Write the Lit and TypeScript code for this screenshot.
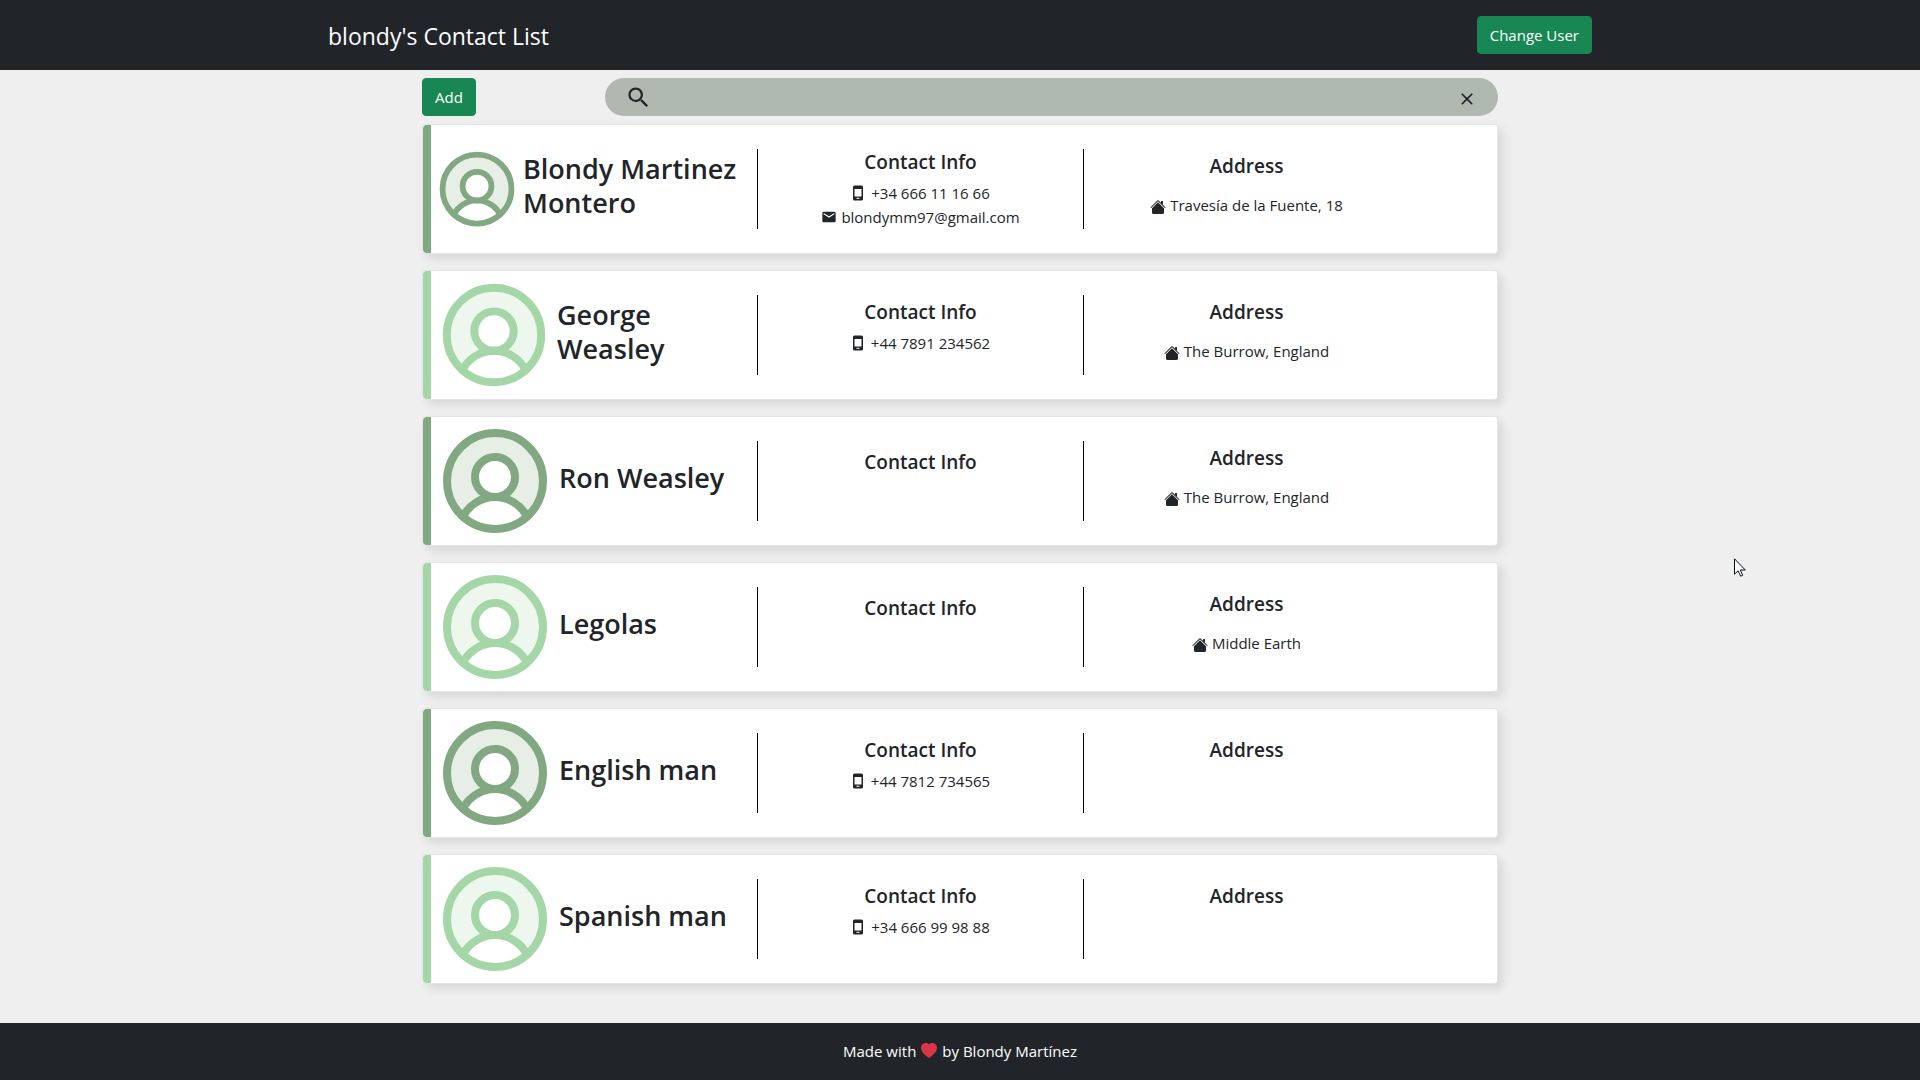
import { LitElement, html, css, svg, nothing } from "lit";
import { customElement, property, state } from "lit/decorators.js";
import { classMap } from "lit/directives/class-map.js";

interface Contact {
  name: string;
  phone?: string;
  email?: string;
  address?: string;
  avatar: "large" | "medium" | "small";
}

const CONTACTS: Contact[] = [
  { name: "Blondy Martinez Montero", phone: "+34 666 11 16 66", email: "blondymm97@gmail.com", address: "Travesía de la Fuente, 18", avatar: "small" },
  { name: "George Weasley", phone: "+44 7891 234562", address: "The Burrow, England", avatar: "medium" },
  { name: "Ron Weasley", address: "The Burrow, England", avatar: "large" },
  { name: "Legolas", address: "Middle Earth", avatar: "large" },
  { name: "English man", phone: "+44 7812 734565", avatar: "large" },
  { name: "Spanish man", phone: "+34 666 99 98 88", avatar: "large" },
];

const icon = (cls: string, box: number, body: unknown) =>
  html`<svg class=${cls} viewBox="0 0 ${box} ${box}" fill="currentColor" aria-hidden="true">${body}</svg>`;

const searchIcon = icon("search-icon", 24, svg`<path d="M15.5 14h-.79l-.28-.27A6.471 6.471 0 0 0 16 9.5 6.5 6.5 0 1 0 9.5 16c1.61 0 3.09-.59 4.23-1.57l.27.28v.79l5 4.99L20.49 19l-4.99-5zm-6 0C7.01 14 5 11.99 5 9.5S7.01 5 9.5 5 14 7.01 14 9.5 11.99 14 9.5 14z"/>`);
const closeIcon = icon("close-icon", 24, svg`<path d="M19 6.41 17.59 5 12 10.59 6.41 5 5 6.41 10.59 12 5 17.59 6.41 19 12 13.41 17.59 19 19 17.59 13.41 12z"/>`);
const phoneIcon = icon("line-icon", 16, svg`<path fill-rule="evenodd" d="M3.500 .5h7A1.500 1.500 0 0 1 12 2v12a1.500 1.500 0 0 1-1.500 1.500h-7A1.500 1.500 0 0 1 2 14V2A1.500 1.500 0 0 1 3.500 .5zM3.500 4v7.500h7V4zM5.500 12.800v1h3v-1z"/>`);
const mailIcon = icon("line-icon", 24, svg`<path d="M20 4H4c-1.1 0-1.99.9-1.99 2L2 18c0 1.1.9 2 2 2h16c1.1 0 2-.9 2-2V6c0-1.1-.9-2-2-2zm0 4-8 5-8-5V6l8 5 8-5v2z"/>`);
const houseIcon = icon("line-icon", 16, svg`<path fill-rule="evenodd" d="m8 3.293 6 6V13.5a1.5 1.5 0 0 1-1.5 1.5h-9A1.5 1.5 0 0 1 2 13.5V9.293l6-6zm5-.793V6l-2-2V2.5a.5.5 0 0 1 .5-.5h1a.5.5 0 0 1 .5.5z"/><path fill-rule="evenodd" d="M7.293 1.5a1 1 0 0 1 1.414 0l6.647 6.646a.5.5 0 0 1-.708.708L8 2.207 1.354 8.854a.5.5 0 1 1-.708-.708L7.293 1.5z"/>`);
const heartIcon = icon("heart-icon", 16, svg`<path fill-rule="evenodd" d="M8 1.314C12.438-3.248 23.534 4.735 8 15-7.534 4.736 3.562-3.248 8 1.314z"/>`);

@customElement("contact-card")
class ContactCard extends LitElement {
  @property({ attribute: false }) contact!: Contact;
  @property({ type: Boolean }) light = false;

  static styles = css`
    :host { display: block; }
    .card {
      border: 1px solid rgba(0, 0, 0, 0.1);
      border-radius: 4px;
      background: #fff;
      box-shadow: 5px 5px 10px rgba(0, 0, 0, 0.1);
      color: #212529;
    }
    .body {
      display: grid;
      grid-template-columns: 163fr 163fr 163fr 44fr;
      align-items: center;
      min-height: 128px;
      border-left: 8px solid #82a882;
      border-radius: 4px;
      --accent: #82a882;
    }
    .body.light { border-left-color: #a5d6a7; --accent: #a5d6a7; }
    .who { display: flex; align-items: center; padding-right: 16px; }
    .avatar { flex: none; color: var(--accent); }
    .large { width: 128px; height: 128px; }
    .medium { width: 126px; height: 126px; }
    .small { width: 92px; height: 92px; }
    .name { margin: 0 0 6px; font-size: 27px; line-height: 34px; font-weight: 550; }
    .info, .address {
      display: flex;
      flex-direction: column;
      align-items: center;
      justify-content: center;
      height: 80px;
      border-left: 1px solid #000;
    }
    .label { margin: 0; padding-top: 1px; font-size: 19px; line-height: 24px; font-weight: 600; }
    .info .label { margin-bottom: 7px; }
    .line {
      display: flex;
      align-items: center;
      gap: 4px;
      margin: 0;
      min-height: 16px;
      font-size: 15px;
      line-height: 24px;
      font-weight: 400;
    }
    .address .label { margin-bottom: 15px; }
    .address .line { min-height: 32px; align-items: flex-start; }
    .address .line-icon { margin-top: 6px; }
    .line-icon { width: 16px; height: 16px; flex: none; }
  `;

  render() {
    const { name, phone, email, address, avatar } = this.contact;
    return html`
      <article class="card">
        <div class=${classMap({ body: true, light: this.light })}>
          <div class="who">
            <svg class="avatar ${avatar}" viewBox="0 0 256 256" fill="none" stroke="currentColor" stroke-width="16" stroke-linecap="round" aria-hidden="true">
              <path fill="currentColor" stroke="none" opacity="0.2" d="M128,32A96,96,0,0,0,63.8,199.4h0A72,72,0,0,1,128,160a40,40,0,1,1,40-40,40,40,0,0,1-40,40,72,72,0,0,1,64.2,39.4A96,96,0,0,0,128,32Z"/>
              <circle cx="128" cy="128" r="96"/>
              <circle cx="128" cy="120" r="40"/>
              <path d="M63.8,199.4a72,72,0,0,1,128.4,0"/>
            </svg>
            <h2 class="name">${name}</h2>
          </div>
          <div class="info">
            <h3 class="label">Contact Info</h3>
            <p class="line">${phone ? html`${phoneIcon}<span>${phone}</span>` : nothing}</p>
            <p class="line">${email ? html`${mailIcon}<span>${email}</span>` : nothing}</p>
          </div>
          <div class="address">
            <h3 class="label">Address</h3>
            <p class="line">${address ? html`${houseIcon}<span>${address}</span>` : nothing}</p>
          </div>
        </div>
      </article>
    `;
  }
}

@customElement("app-root")
class AppRoot extends LitElement {
  @state() private query = "";

  static styles = css`
    :host {
      display: flex;
      flex-direction: column;
      min-height: 100vh;
      position: relative;
      background: #efefef;
      color: #fff;
      font-family: "Segoe UI", "Open Sans", "Noto Sans", sans-serif;
      font-size: 15px;
      line-height: 24px;
    }
    *, *::before, *::after { box-sizing: border-box; }
    .header { background: #212529; padding: 16px; }
    .bar {
      display: flex;
      align-items: center;
      justify-content: space-between;
      max-width: 1264px;
      margin: 0 auto;
    }
    .title { margin: 0; padding-top: 2px; font-size: 23px; line-height: 36px; font-weight: 400; }
    .button {
      height: 38px;
      padding: 0 12px;
      border: 1px solid #198754;
      border-radius: 4px;
      background: #198754;
      color: #fff;
      font: inherit;
    }
    .main {
      flex: 1;
      width: 100%;
      max-width: 1076px;
      margin: 0 auto;
      padding: 8px 0 36px;
    }
    .tools { display: grid; grid-template-columns: 17fr 83fr; align-items: center; margin-bottom: 8px; }
    .tools .button { justify-self: start; }
    .search {
      display: flex;
      align-items: center;
      height: 38px;
      padding: 0 21px 0 20px;
      border-radius: 19px;
      background: #afb9af;
      color: #212529;
    }
    .search-label { display: flex; }
    .input { flex: 1; min-width: 0; margin: 0 12px; border: 0; outline: 0; background: none; font: inherit; color: inherit; }
    .clear { display: flex; padding: 4px 0 0; border: 0; background: none; color: inherit; }
    .search-icon { width: 27px; height: 27px; }
    .close-icon { width: 20px; height: 20px; }
    .list { display: grid; gap: 16px; margin: 0; padding: 0; list-style: none; }
    .footer {
      display: flex;
      align-items: center;
      justify-content: center;
      gap: 5px;
      height: 57px;
      padding-bottom: 1px;
      background: #212529;
    }
    .heart-icon { width: 16px; height: 16px; color: #dc3545; }
    .pointer { position: absolute; left: 1734px; top: 558px; width: 12px; height: 19px; }
  `;

  private onInput(e: Event) {
    this.query = (e.target as HTMLInputElement).value;
  }

  render() {
    const q = this.query.toLowerCase();
    const shown = CONTACTS.filter((c) => c.name.toLowerCase().includes(q));
    return html`
      <header class="header">
        <div class="bar">
          <h1 class="title">blondy's Contact List</h1>
          <button class="button" type="button">Change User</button>
        </div>
      </header>
      <main class="main">
        <div class="tools">
          <button class="button" type="button">Add</button>
          <div class="search">
            <label class="search-label" for="search" aria-label="Search contacts">${searchIcon}</label>
            <input class="input" id="search" type="text" aria-label="Search contacts" .value=${this.query} @input=${this.onInput} />
            <button class="clear" type="button" aria-label="Clear search" @click=${() => (this.query = "")}>${closeIcon}</button>
          </div>
        </div>
        <ul class="list">
          ${shown.map((c, i) => html`<li><contact-card .contact=${c} ?light=${i % 2 === 1}></contact-card></li>`)}
        </ul>
      </main>
      <footer class="footer"><span>Made with</span>${heartIcon}<span>by Blondy Martínez</span></footer>
      <svg class="pointer" viewBox="0 0 12 19" aria-hidden="true">
        <path d="M.5.8v15.4l3.6-3.4 2.6 5.4 2-.9-2.4-5.3h5z" fill="#fff" stroke="#0a0f1e" stroke-width="1"/>
      </svg>
    `;
  }
}
